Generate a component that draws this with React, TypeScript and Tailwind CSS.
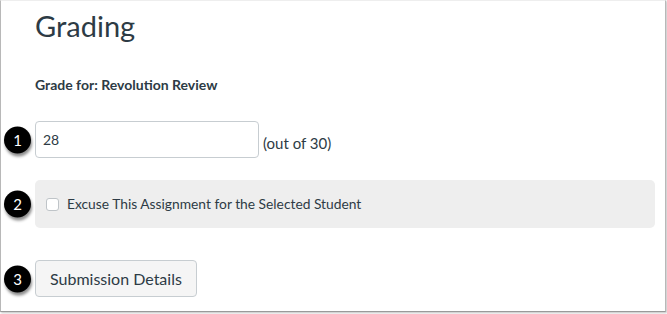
import React from "react";

function Badge({ n }: { n: number }) {
  return (
    <span className="absolute left-[-31px] top-1/2 -translate-y-1/2 flex h-[27px] w-[27px] items-center justify-center rounded-full bg-black text-[15px] text-white shadow-[1px_3px_3px_rgba(0,0,0,0.45)]">
      {n}
    </span>
  );
}

export default function App() {
  return (
    <div className="h-[314px] w-[667px] bg-white font-['Lato','Liberation_Sans',sans-serif] text-[#2d3b45]">
      <div className="h-[312px] w-[666px] border-x border-b border-t border-x-[#b8b8b8] border-b-[#9a9a9a] border-t-[#eeeeee] bg-white pl-[34px] shadow-[1px_1px_2px_rgba(0,0,0,0.25)]">
        <h1 className="mt-[7px] text-[29px] leading-[36px] font-normal">Grading</h1>

        <p className="mt-[33px] text-[14px] leading-[16px] font-bold">Grade for: Revolution Review</p>

        {/* score input */}
        <div className="mt-[28px] flex items-center">
          <div className="relative">
            <Badge n={1} />
            <input
              type="text"
              defaultValue="28"
              className="h-[37px] w-[224px] rounded-[4px] border border-[#c7cdd1] bg-white px-[7px] text-[14px] text-[#2d3b45] outline-none"
            />
          </div>
          <span className="ml-[4px] mt-[8px] text-[15px]">(out of 30)</span>
        </div>

        {/* excuse */}
        <div className="relative mt-[22px] flex h-[48px] w-[620px] items-center rounded-[5px] bg-[#eeeeee] pl-[11px]">
          <Badge n={2} />
          <span className="h-[13px] w-[13px] rounded-[3px] border border-[#bfc4c8] bg-white" />
          <span className="ml-[8px] text-[13.8px]">Excuse This Assignment for the Selected Student</span>
        </div>

        {/* details button */}
        <div className="relative mt-[32px] w-fit">
          <Badge n={3} />
          <button className="flex h-[37px] items-center rounded-[4px] border border-[#c7cdd1] bg-[#f5f5f5] px-[14px] text-[16px] text-[#2d3b45]">
            Submission Details
          </button>
        </div>
      </div>
    </div>
  );
}
